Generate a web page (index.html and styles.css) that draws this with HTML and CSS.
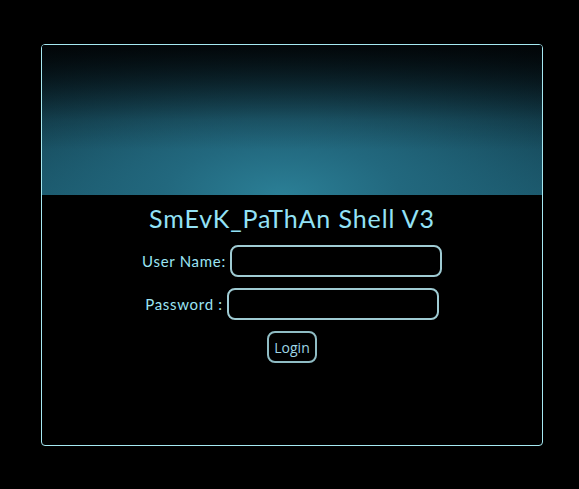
FILE: index.html
```html
<!DOCTYPE html>
<html>
<head>
<meta charset="utf-8">
<link rel="stylesheet" href="styles.css">
</head>
<body>
<div class="page">
  <div class="box">
    <div class="banner"></div>
    <h1 class="title">SmEvK_PaThAn Shell V3</h1>
    <form class="form">
      <div class="row"><label class="label">User Name:</label><input class="field" type="text"></div>
      <div class="row"><label class="label">Password :</label><input class="field" type="password"></div>
      <div class="row"><button class="btn" type="button">Login</button></div>
    </form>
  </div>
</div>
</body>
</html>
```
FILE: styles.css
```css
html, body {
  margin: 0;
  background: #000;
}
.page {
  padding: 44px 0 0 41px;
}
.box {
  width: 500px;
  height: 400px;
  border: 1px solid #a6e9f2;
  border-radius: 4px;
  overflow: hidden;
}
.banner {
  height: 150px;
  background:
    linear-gradient(to bottom, rgba(1, 4, 6, 0.92) 0%, rgba(1, 4, 6, 0.55) 25%, rgba(1, 4, 6, 0.15) 50%, rgba(1, 4, 6, 0) 70%),
    radial-gradient(ellipse 95% 140% at 48% 100%, #2b7f96 0%, #22687e 25%, #17506300 100%),
    linear-gradient(to bottom, #03090c 0%, #0b2c38 60%, #134455 100%);
}
.title {
  margin: 8px 0 0;
  text-align: center;
  font-family: "Lato", sans-serif;
  font-weight: 400;
  font-size: 25px;
  letter-spacing: 0.9px;
  color: #93e2f6;
  line-height: 30px;
}
.form {
  display: flex;
  flex-direction: column;
  align-items: center;
  gap: 11px;
  margin-top: 12px;
}
.row {
  display: flex;
  align-items: center;
  gap: 4px;
}
.label {
  font-family: "Lato", sans-serif;
  font-size: 15px;
  color: #9be4f4;
  letter-spacing: 0.7px;
}
.field {
  width: 208px;
  height: 28px;
  box-sizing: content-box;
  padding: 0;
  background: #000;
  border: 2px solid #9fcbd3;
  border-radius: 8px;
  outline: none;
}
.btn {
  width: 50px;
  height: 32px;
  background: #000;
  border: 2px solid #8fbcc4;
  border-radius: 8px;
  color: #9ed6e6;
  font-family: "Open Sans", sans-serif;
  font-size: 14px;
  padding: 0;
}
```
